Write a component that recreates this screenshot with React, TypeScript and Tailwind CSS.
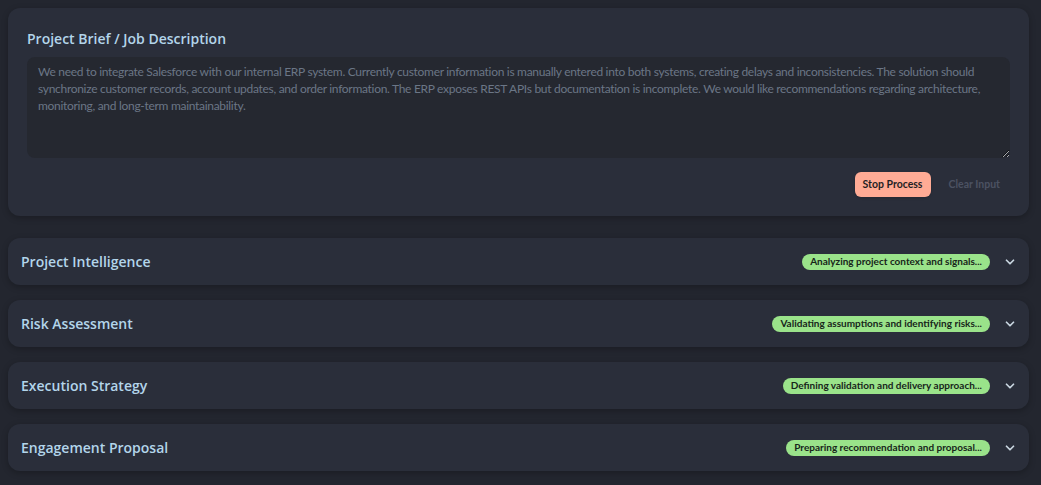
import React from 'react';
import { ChevronDown } from 'lucide-react';

const brief =
  'We need to integrate Salesforce with our internal ERP system. Currently customer information is manually entered into both systems, creating delays and inconsistencies. The solution should synchronize customer records, account updates, and order information. The ERP exposes REST APIs but documentation is incomplete. We would like recommendations regarding architecture, monitoring, and long-term maintainability.';

const sections = [
  { title: 'Project Intelligence', status: 'Analyzing project context and signals...' },
  { title: 'Risk Assessment', status: 'Validating assumptions and identifying risks...' },
  { title: 'Execution Strategy', status: 'Defining validation and delivery approach...' },
  { title: 'Engagement Proposal', status: 'Preparing recommendation and proposal...' },
];

const App: React.FC = () => {
  return (
    <div
      className="min-h-screen bg-[#23262f] pl-2 pr-3 pt-2 pb-4 flex flex-col"
      style={{ fontFamily: 'Lato, "Open Sans", sans-serif' }}
    >
      {/* Brief input card */}
      <div className="bg-[#2a2e3a] rounded-xl px-[19px] pt-[21px] pb-[19px] shadow-[0_2px_6px_rgba(0,0,0,0.25)]">
        <h2 className="font-['Open_Sans'] text-[14px] font-semibold text-[#b3d5ea] leading-5 mb-[8px]">
          Project Brief / Job Description
        </h2>
        <textarea
          readOnly
          placeholder={brief}
          className="block w-full h-[101px] bg-[#252830] rounded-lg px-[11px] pt-[6px] pb-[7px] font-['Lato'] text-[12px] tracking-[-0.3px] leading-[17px] text-[#d1d5db] placeholder:text-[#6b7686] outline-none resize-y"
        />
        <div className="flex justify-end items-center gap-[18px] mt-[14px] pr-[10px]">
          <button className="bg-[#ffab95] text-[#1f1f24] text-[10.5px] font-bold h-[25px] px-[8px] rounded-md shadow-sm">
            Stop Process
          </button>
          <button className="text-[#4c5262] text-[10.5px] font-bold">Clear Input</button>
        </div>
      </div>

      {/* Accordion sections */}
      <div className="flex flex-col gap-[15px] mt-[22px]">
        {sections.map((s) => (
          <div
            key={s.title}
            className="bg-[#2a2e3a] rounded-xl h-[47px] pl-[13px] pr-[12px] flex items-center justify-between shadow-[0_2px_6px_rgba(0,0,0,0.25)]"
          >
            <span className="font-['Open_Sans'] text-[14px] font-semibold text-[#b3d5ea] -mt-[1px]">{s.title}</span>
            <div className="flex items-center gap-[13px]">
              <span className="bg-[#9ae38a] text-[#17251a] text-[10px] font-bold rounded-full h-[16px] px-[8px] flex items-center">
                {s.status}
              </span>
              <ChevronDown size={14} strokeWidth={3} className="text-[#c9d6e0]" />
            </div>
          </div>
        ))}
      </div>
    </div>
  );
};

export default App;
